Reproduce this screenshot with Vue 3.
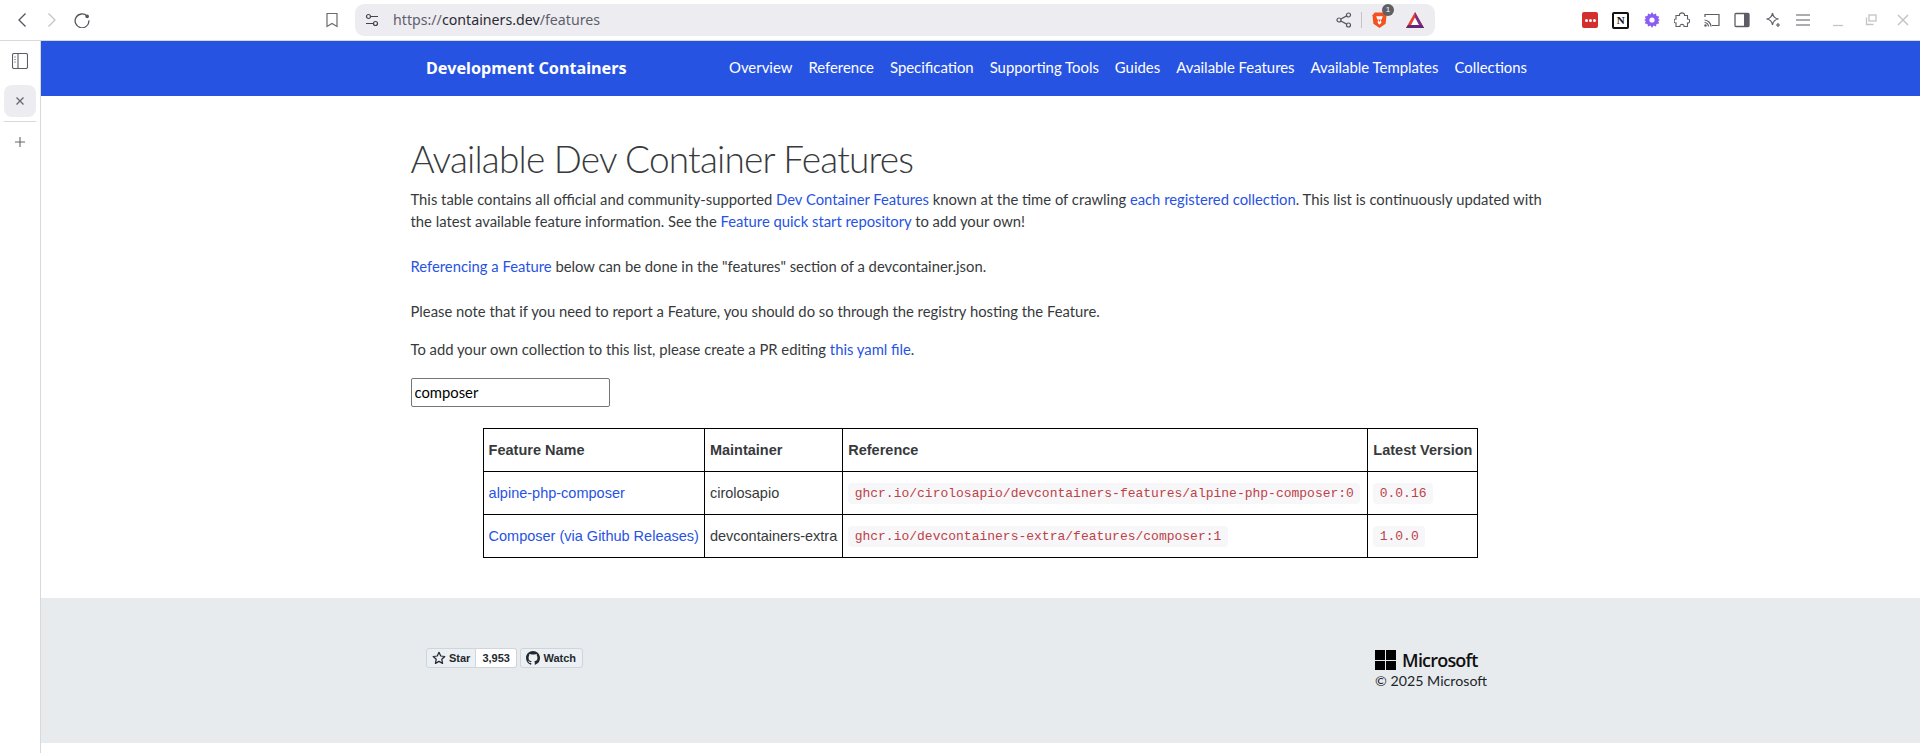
<template>
  <div class="window">
    <header class="toolbar">
      <div class="nav-btns">
        <svg class="ico" viewBox="0 0 16 16"><path d="M11.500 1.500 5 8l6.500 6.500" fill="none" stroke="#55555e" stroke-width="1.300" /></svg>
        <svg class="ico" viewBox="0 0 16 16"><path d="M4.500 1.500 11 8l-6.500 6.500" fill="none" stroke="#c4c4c8" stroke-width="1.300" /></svg>
        <svg class="ico" viewBox="0 0 16 16"><path d="M13.100 4.200A6.900 6.900 0 1 0 14.900 8.400" fill="none" stroke="#55555e" stroke-width="1.300" /><circle cx="13.200" cy="4.400" r="1.800" fill="#55555e" /></svg>
      </div>
      <svg class="ico bookmark" viewBox="0 0 16 16"><path d="M3 1.500h10v13l-5-3-5 3z" fill="none" stroke="#6b6b73" stroke-width="1.200" /></svg>
      <div class="urlbar">
        <svg class="ico" viewBox="0 0 16 16"><g fill="none" stroke="#44444c" stroke-width="1.200"><circle cx="4.500" cy="4.500" r="2" /><circle cx="11.500" cy="11.500" r="2" /><path d="M7 4.500h7M2 11.500h7" /></g></svg>
        <span class="url"><span class="dim">https://</span>containers.dev<span class="dim">/features</span></span>
        <svg class="ico share" viewBox="0 0 16 16"><g fill="none" stroke="#55555e" stroke-width="1.200"><circle cx="12.500" cy="3" r="2" /><circle cx="12.500" cy="13" r="2" /><circle cx="3" cy="8" r="2" /><path d="m4.800 7 5.900-3.100M4.800 9l5.900 3.100" /></g></svg>
        <i class="divider"></i>
        <span class="brave">
          <svg viewBox="0 0 16 18" width="15" height="18"><path d="M3 1h10l2.500 3-1 9L8 17.500 1.500 13l-1-9z" fill="#f4511e" /><path d="M4.500 5h7l-1 3-1 1 .5 3L8 14l-2-2 .5-3-1-1z" fill="#fff" /><path d="M6.500 8.500h3L8 11z" fill="#f4511e" /></svg>
          <b class="badge">1</b>
        </span>
        <svg class="bat" viewBox="0 0 18 16" width="18" height="16"><path d="M9 0 18 16H0z" fill="#e8412b" /><path d="M9 0 18 16H9l0-3h3.700L9 6z" fill="#7b2c85" /><path d="M0 16h18l-2-3H2z" fill="#66267a" /><path d="M9 5.500 13 13H5z" fill="#fff" /></svg>
      </div>
      <div class="ext-btns">
        <span class="ext-red"><i></i><i></i><i></i></span>
        <span class="ext-notion">N</span>
        <svg class="ico" viewBox="0 0 16 16"><path d="M8 0l1.500 2.500L12 1.500l.5 2.500 2.700.5-1 2.500L16 8l-1.800 1 1 2.500-2.700.5-.5 2.500-2.500-1L8 16l-1.500-2.500-2.500 1-.5-2.500-2.700-.5 1-2.500L0 8l1.800-1-1-2.500 2.700-.5.500-2.500 2.500 1z" fill="#8b5cf0" /><circle cx="8" cy="8" r="2.600" fill="#fff" /></svg>
        <svg class="ico" viewBox="0 0 16 16"><path d="M5.500 3.500c-.5-3.500 5.500-3.500 5 0h3v3.500c2.800-.5 2.800 4.500 0 4v3.500h-3.500c.5-2.800-4.500-2.800-4 0H2v-3.500c-2.500.5-2.500-4.500 0-4V3.500z" fill="none" stroke="#5d5d65" stroke-width="1.100" /></svg>
        <svg class="ico" viewBox="0 0 16 16"><g fill="none" stroke="#5d5d65" stroke-width="1.200"><path d="M1 5V2.500h14v11H8" /><path d="M.5 8a7 7 0 0 1 6.500 6.500M.5 10.500A4.500 4.500 0 0 1 4.500 14.500" /></g><circle cx="1.500" cy="13.500" r="1.200" fill="#5d5d65" /></svg>
        <svg class="ico" viewBox="0 0 16 16"><rect x="1" y="1.500" width="14" height="13" rx="1" fill="none" stroke="#5d5d65" stroke-width="1.300" /><rect x="10" y="1.500" width="5" height="13" fill="#5d5d65" /></svg>
        <svg class="ico" viewBox="0 0 16 16"><path d="M7.500 1c.5 3.500 2.500 5.500 6 6-3.500.5-5.500 2.500-6 6-.5-3.500-2.500-5.500-6-6 3.500-.5 5.500-2.500 6-6z" fill="none" stroke="#5d5d65" stroke-width="1.200" /><path d="M13 11v4M11 13h4" stroke="#5d5d65" stroke-width="1.200" /></svg>
        <svg class="ico" viewBox="0 0 16 16"><path d="M1 3h14M1 8h14M1 13h14" stroke="#5d5d65" stroke-width="1.200" /></svg>
      </div>
      <div class="win-btns">
        <svg class="ico" viewBox="0 0 16 16"><path d="M3 13.500h10" stroke="#c4c4c8" stroke-width="1.300" /></svg>
        <svg class="ico" viewBox="0 0 16 16"><g fill="none" stroke="#c4c4c8" stroke-width="1.300"><rect x="6" y="3" width="7" height="6" /><path d="M3.500 5.500v7h7" /></g></svg>
        <svg class="ico" viewBox="0 0 16 16"><path d="m3 3 10 10M13 3 3 13" stroke="#c4c4c8" stroke-width="1.500" /></svg>
      </div>
    </header>

    <div class="body">
      <aside class="sidebar">
        <svg class="ico" viewBox="0 0 16 16"><g fill="none" stroke="#5d5d65" stroke-width="1.100"><rect x=".5" y=".5" width="15" height="15" rx="1.500" /><path d="M6 .5v15" /></g><path d="M3 3.500v1M3 6v1M3 8.500v1" stroke="#5d5d65" stroke-width="1.200" /></svg>
        <div class="tab">
          <svg viewBox="0 0 10 10" width="10" height="10"><path d="m1.500 1.500 7 7M8.500 1.500l-7 7" stroke="#66666e" stroke-width="1.300" /></svg>
        </div>
        <i class="side-sep"></i>
        <svg viewBox="0 0 12 12" width="12" height="12"><path d="M6 1v10M1 6h10" stroke="#66666e" stroke-width="1.100" /></svg>
      </aside>

      <div class="page">
        <nav class="navbar">
          <a class="brand">Development Containers</a>
          <ul class="nav-links">
            <li v-for="item in navItems" :key="item">{{ item }}</li>
          </ul>
        </nav>

        <main class="content">
          <h1>Available Dev Container Features</h1>
          <p class="intro">
            This table contains all official and community-supported <a>Dev Container Features</a> known at the time of crawling <a>each registered collection</a>. This list is continuously updated with the latest available feature information. See the <a>Feature quick start repository</a> to add your own!
          </p>
          <p class="ref"><a>Referencing a Feature</a> below can be done in the "features" section of a devcontainer.json.</p>
          <p class="note">Please note that if you need to report a Feature, you should do so through the registry hosting the Feature.</p>
          <p class="add">To add your own collection to this list, please create a PR editing <a>this yaml file</a>.</p>
          <input class="search" type="text" value="composer" />

          <table>
            <thead>
              <tr>
                <th>Feature Name</th>
                <th>Maintainer</th>
                <th>Reference</th>
                <th>Latest Version</th>
              </tr>
            </thead>
            <tbody>
              <tr v-for="row in rows" :key="row.name">
                <td><a>{{ row.name }}</a></td>
                <td>{{ row.maintainer }}</td>
                <td class="ref-cell"><code>{{ row.reference }}</code></td>
                <td><code>{{ row.version }}</code></td>
              </tr>
            </tbody>
          </table>
        </main>

        <footer class="footer">
          <div class="gh-btns">
            <span class="gh-btn">
              <svg viewBox="0 0 16 16" width="14" height="14"><path d="m8 1.500 2 4.200 4.600.6-3.400 3.200.9 4.600L8 11.900l-4.100 2.200.9-4.600L1.400 6.300 6 5.700z" fill="none" stroke="#24292f" stroke-width="1.400" stroke-linejoin="round" /></svg>Star</span><span class="gh-count">3,953</span>
            <span class="gh-btn watch">
              <svg viewBox="0 0 16 16" width="14" height="14"><path d="M8 0C3.580 0 0 3.580 0 8c0 3.540 2.290 6.530 5.470 7.590.4.070.55-.17.55-.38 0-.19-.01-.82-.01-1.490-2.010.37-2.530-.49-2.690-.94-.09-.23-.48-.94-.82-1.130-.28-.15-.68-.52-.01-.53.63-.01 1.080.58 1.230.82.720 1.210 1.870.87 2.330.66.070-.52.280-.87.510-1.070-1.780-.2-3.640-.89-3.640-3.950 0-.87.310-1.590.820-2.150-.08-.2-.36-1.020.08-2.120 0 0 .67-.21 2.200.82.640-.18 1.320-.27 2-.27s1.360.09 2 .27c1.530-1.040 2.200-.82 2.200-.82.440 1.100.160 1.920.08 2.120.51.560.82 1.270.82 2.150 0 3.070-1.870 3.750-3.650 3.950.29.250.54.730.54 1.480 0 1.070-.01 1.930-.01 2.200 0 .21.150.46.550.38A8.010 8.010 0 0 0 16 8c0-4.420-3.580-8-8-8z" fill="#24292f" /></svg>Watch</span>
          </div>
          <div class="ms">
            <div class="ms-logo">
              <span class="ms-squares"><i></i><i></i><i></i><i></i></span>
              <span class="ms-word">Microsoft</span>
            </div>
            <div class="ms-copy">© 2025 Microsoft</div>
          </div>
        </footer>
      </div>
    </div>
  </div>
</template>

<script setup>
const navItems = [
  "Overview",
  "Reference",
  "Specification",
  "Supporting Tools",
  "Guides",
  "Available Features",
  "Available Templates",
  "Collections",
];

const rows = [
  {
    name: "alpine-php-composer",
    maintainer: "cirolosapio",
    reference: "ghcr.io/cirolosapio/devcontainers-features/alpine-php-composer:0",
    version: "0.0.16",
  },
  {
    name: "Composer (via Github Releases)",
    maintainer: "devcontainers-extra",
    reference: "ghcr.io/devcontainers-extra/features/composer:1",
    version: "1.0.0",
  },
];
</script>

<style>
html,
body {
  margin: 0;
  background: #fff;
  overflow: hidden;
}
</style>

<style scoped>
.window {
  width: 1920px;
  height: 753px;
  font-family: "Lato", "Liberation Sans", sans-serif;
  color: #373a3c;
  display: flex;
  flex-direction: column;
  overflow: hidden;
}
.ico {
  width: 16px;
  height: 16px;
  flex: none;
}

/* browser chrome */
.toolbar {
  height: 40px;
  flex: none;
  display: flex;
  align-items: center;
  border-bottom: 1px solid #d9d9dc;
  padding-left: 14px;
}
.nav-btns {
  display: flex;
  gap: 14px;
  margin-bottom: 1px;
}
.bookmark {
  margin-left: 234px;
}
.urlbar {
  width: 1080px;
  height: 32px;
  margin-left: 15px;
  background: #edecf1;
  border-radius: 9px;
  display: flex;
  align-items: center;
  box-sizing: border-box;
  padding-left: 9px;
}
.url {
  margin-left: 13px;
  flex: 1;
  padding-bottom: 2px;
  font: 14.200px "Noto Sans", sans-serif;
  color: #2b2b33;
}
.dim {
  color: #5f5f6b;
}
.share {
  margin-right: 9px;
}
.divider {
  width: 1px;
  height: 16px;
  background: #c4c4c8;
  margin-right: 10px;
}
.brave {
  position: relative;
  display: flex;
  margin-right: 19px;
}
.badge {
  position: absolute;
  top: -7px;
  left: 10px;
  width: 12px;
  height: 12px;
  border-radius: 50%;
  background: #5f5f66;
  color: #fff;
  font: 8px/12px "Liberation Sans", sans-serif;
  text-align: center;
}
.bat {
  margin-right: 11px;
}
.ext-btns {
  display: flex;
  align-items: center;
  gap: 14.300px;
  margin-left: 147px;
}
.ext-red {
  width: 16px;
  height: 16px;
  background: #d32f2f;
  border-radius: 2px;
  display: flex;
  align-items: center;
  justify-content: center;
  gap: 1px;
}
.ext-red i {
  width: 3px;
  height: 3px;
  background: #fff;
  border-radius: 50%;
}
.ext-notion {
  width: 13px;
  height: 13px;
  border: 2px solid #111;
  border-radius: 2px;
  font: 700 11px/13px "Liberation Serif", serif;
  color: #111;
  text-align: center;
}
.win-btns {
  display: flex;
  gap: 16.500px;
  margin-left: 19px;
}

.body {
  flex: 1;
  display: flex;
  min-height: 0;
}
.sidebar {
  width: 40px;
  flex: none;
  border-right: 1px solid #d9d9dc;
  display: flex;
  flex-direction: column;
  align-items: center;
  padding-top: 12px;
}
.tab {
  width: 32px;
  height: 32px;
  margin-top: 16px;
  border-radius: 8px;
  background: #edecf1;
  display: flex;
  align-items: center;
  justify-content: center;
}
.side-sep {
  width: 32px;
  height: 1px;
  background: #d9d9dc;
  margin: 4px 0 14px;
}

/* site */
.page {
  flex: 1;
  min-width: 0;
  display: flex;
  flex-direction: column;
}
.navbar {
  height: 55px;
  flex: none;
  background: #2753e3;
  display: flex;
  align-items: center;
  padding-left: 385px;
}
.brand {
  color: #fff;
  font: 700 16.200px "Noto Sans", sans-serif;
  width: 303px;
  padding-bottom: 1px;
}
.nav-links {
  display: flex;
  gap: 16px;
  list-style: none;
  margin: 0;
  padding: 0 0 3px;
  font-size: 14.900px;
  color: #fff;
}
.content {
  flex: none;
  height: 502px;
  box-sizing: border-box;
  width: 1140px;
  margin: 0 auto;
  padding-top: 39px;
  font-size: 14.800px;
  line-height: 22px;
}
h1 {
  margin: 0 0 5px;
  font-size: 37px;
  font-weight: 300;
  line-height: 48px;
  letter-spacing: -0.800px;
}
p {
  margin: 0;
}
a {
  color: #2753e3;
}
.ref {
  margin-top: 23px;
}
.note {
  margin-top: 23px;
}
.add {
  margin-top: 16px;
}
.search {
  display: block;
  box-sizing: border-box;
  width: 199px;
  height: 29px;
  margin-top: 18px;
  padding: 0 3px 2px;
  border: 1px solid #767676;
  border-radius: 2px;
  font: 14.800px "Lato", sans-serif;
  color: #000;
}
table {
  margin: 21px auto 0;
  border-collapse: collapse;
  font: 14.500px/21px "Liberation Sans", sans-serif;
}
th,
td {
  border: 1px solid #000;
  padding: 4px 5px;
  height: 34px;
  text-align: left;
}
.ref-cell {
  padding-right: 7px;
}
code {
  font-family: "Liberation Mono", monospace;
  font-size: 13px;
  color: #bd4147;
  background: #f7f7f9;
  padding: 3.200px 6.400px;
  border-radius: 4px;
}
.footer {
  height: 145px;
  flex: none;
  background: #e7ebee;
  display: flex;
  justify-content: space-between;
  padding: 50px 0 0 385px;
  box-sizing: border-box;
  width: 100%;
}
.gh-btns {
  display: flex;
  align-items: flex-start;
  font: 700 11px/18px "Liberation Sans", sans-serif;
  color: #24292f;
}
.gh-btn,
.gh-count {
  height: 20px;
  box-sizing: border-box;
  border: 1px solid #cfd5da;
  display: flex;
  align-items: center;
}
.gh-btn {
  background: #ebf0f4;
  padding: 0 5px;
  gap: 3px;
  border-radius: 3px 0 0 3px;
}
.gh-count {
  background: #fff;
  border-left: 0;
  padding: 0 6px;
  border-radius: 0 3px 3px 0;
}
.gh-btn.watch {
  margin-left: 3px;
  padding: 0 5.500px;
  border-radius: 3px;
}
.ms {
  margin-right: 433px;
  margin-top: 2px;
}
.ms-logo {
  display: flex;
  align-items: center;
  gap: 6px;
}
.ms-squares {
  width: 21px;
  height: 20px;
  display: grid;
  grid-template-columns: 1fr 1fr;
  gap: 1px;
}
.ms-squares i {
  background: #000;
}
.ms-word {
  font: 600 18px/20px "Open Sans", sans-serif;
  color: #111;
  letter-spacing: -0.800px;
}
.ms-copy {
  margin-top: 1px;
  font-size: 14.200px;
  line-height: 20px;
  color: #212529;
}
</style>
